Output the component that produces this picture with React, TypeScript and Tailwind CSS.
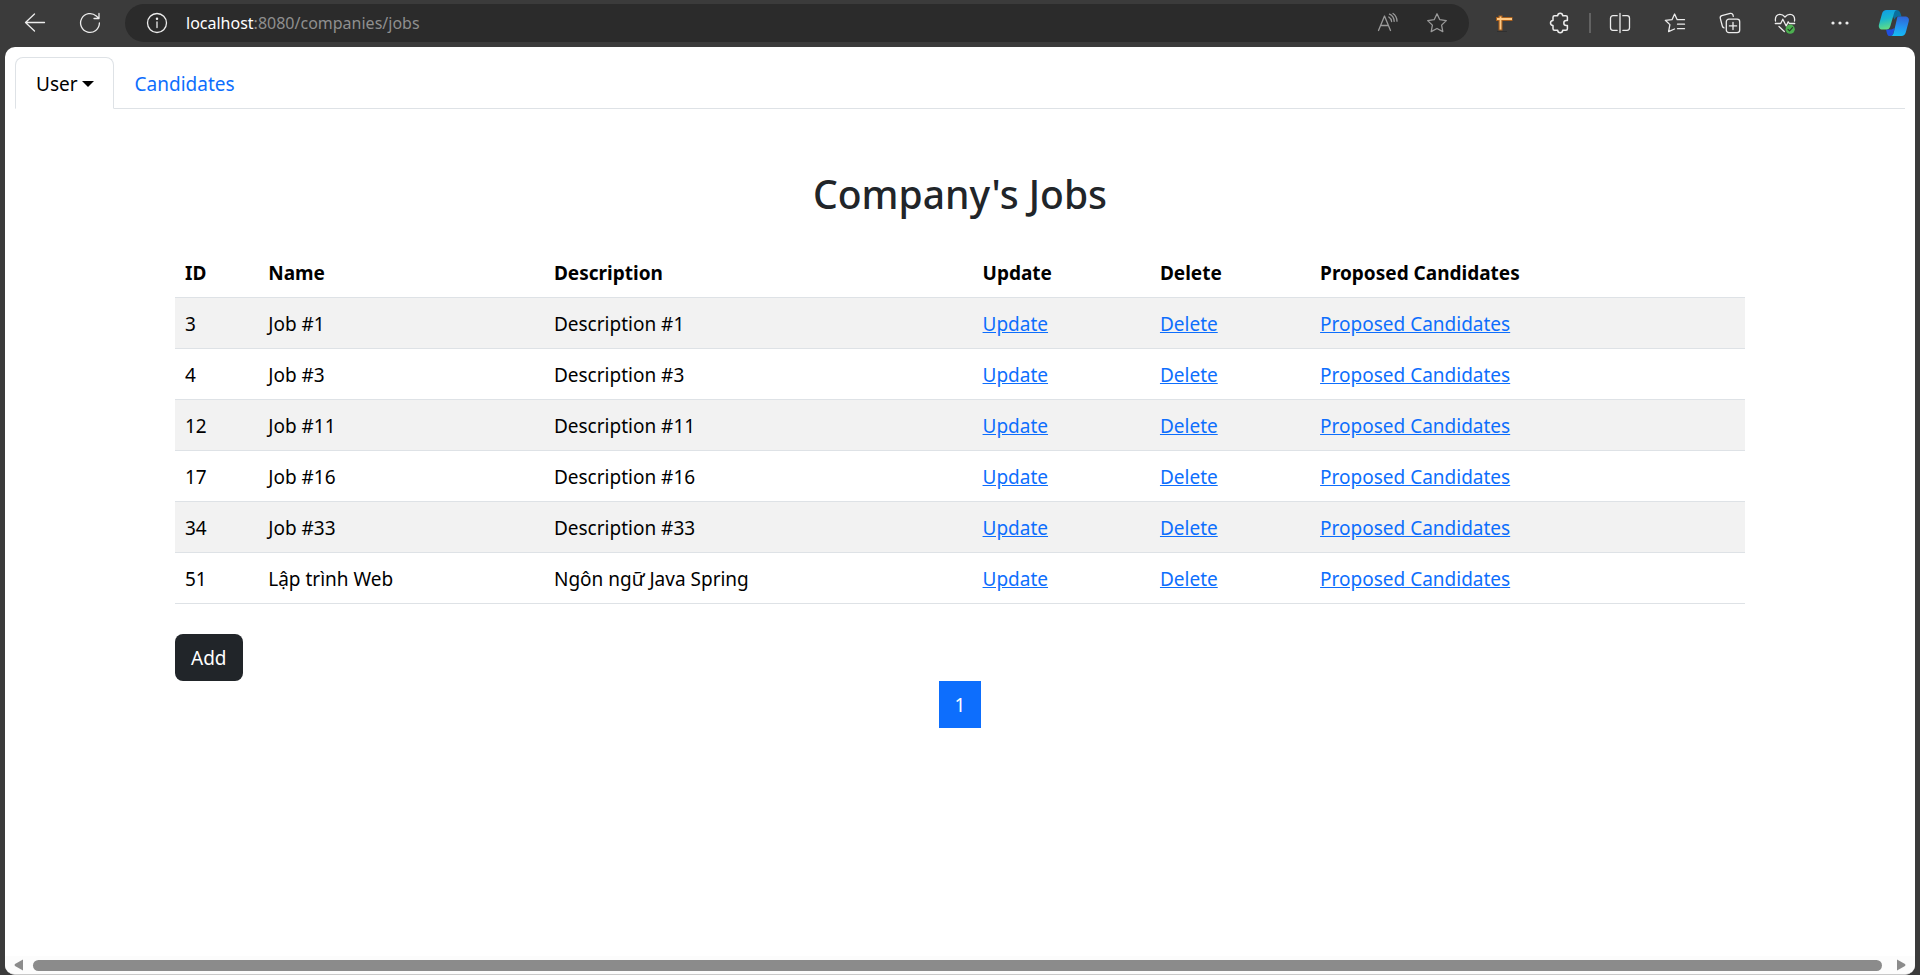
import React from "react";

type Job = { id: number; name: string; description: string };

const jobs: Job[] = [
  { id: 3, name: "Job #1", description: "Description #1" },
  { id: 4, name: "Job #3", description: "Description #3" },
  { id: 12, name: "Job #11", description: "Description #11" },
  { id: 17, name: "Job #16", description: "Description #16" },
  { id: 34, name: "Job #33", description: "Description #33" },
  { id: 51, name: "Lập trình Web", description: "Ngôn ngữ Java Spring" },
];

const columns = ["ID", "Name", "Description", "Update", "Delete", "Proposed Candidates"];

const cell = "px-2.5 pt-[11px] pb-[9px]";

function Icon({ children, stroke = "#ececec" }: { children: React.ReactNode; stroke?: string }) {
  return (
    <svg
      width="22"
      height="22"
      viewBox="0 0 22 22"
      fill="none"
      stroke={stroke}
      strokeWidth="1.3"
      strokeLinecap="round"
      strokeLinejoin="round"
      aria-hidden="true"
    >
      {children}
    </svg>
  );
}

function ToolButton({ label, children }: { label: string; children: React.ReactNode }) {
  return (
    <button type="button" aria-label={label} className="flex h-10 w-[55px] items-center justify-center">
      {children}
    </button>
  );
}

function Copilot() {
  return (
    <svg width="32" height="28" viewBox="0 0 32 28" aria-hidden="true">
      <defs>
        <linearGradient id="cpLeft" x1="0" y1="0" x2="0.2" y2="1">
          <stop offset="0" stopColor="#0f9be8" />
          <stop offset="0.5" stopColor="#19b6cf" />
          <stop offset="1" stopColor="#5fdc86" />
        </linearGradient>
        <linearGradient id="cpRight" x1="0.4" y1="0" x2="0.3" y2="1">
          <stop offset="0" stopColor="#2f66d8" />
          <stop offset="0.5" stopColor="#2492ef" />
          <stop offset="1" stopColor="#14bdf5" />
        </linearGradient>
      </defs>
      <path d="M15 1h3.500c2 0 3.200 1 3.900 3l1.100 3.500h-3.200c-2 0-3 1-3.700 3L14 6z" fill="#0a6f9e" />
      <path d="M8 20.500h5.500l3-1.500-1 5c-.5 2-1.500 3-3.500 3-1.800 0-2.500-1-3-2.600z" fill="#1f4fe0" />
      <path d="M8.500 1H19c-1.500 0-2.300 1-2.900 3l-3.700 13c-.7 2.500-1.900 3.500-4.200 3.500H4.500C1.500 20.500.3 18.400 1 15.500L4 4.800C4.800 2.200 6.200 1 8.500 1z" fill="url(#cpLeft)" />
      <path d="M20.300 7.500h6.200c3.600 0 5 2 4.200 5L27.900 23c-.7 2.700-2.100 4-4.500 4H12.500c1.600 0 2.500-1 3.100-3l3.200-13.500c.4-2 .5-3 1.500-3z" fill="url(#cpRight)" />
    </svg>
  );
}

function BrowserBar() {
  return (
    <header className="flex h-[47px] shrink-0 items-start bg-[#3b3b3b] pt-1">
      <div className="flex h-[38px] w-[125px] shrink-0 items-center pl-[7px]">
        <ToolButton label="Back">
          <Icon>
            <path d="M1.500 10.500h19M10.500 2l-9 8.500 9 8.500" />
          </Icon>
        </ToolButton>
        <ToolButton label="Refresh">
          <Icon>
            <path d="M20.400 11a9.400 9.400 0 1 1-3.100-7l2.200 2M20 1.500v5h-5" />
          </Icon>
        </ToolButton>
      </div>
      <div className="flex h-[38px] min-w-0 flex-1 items-center rounded-full bg-[#2b2b2b] pl-[21px] pr-[21px]">
        <button type="button" aria-label="View site information" className="mr-[18px]">
          <Icon>
            <circle cx="11" cy="11" r="9.500" />
            <path d="M11 10v5.500" />
            <circle cx="11" cy="6.800" r="0.600" fill="#ececec" />
          </Icon>
        </button>
        <div className="flex-1 whitespace-nowrap text-[16px] leading-6 text-[#8f8f8f]">
          <span className="text-white">localhost</span>:8080/companies/jobs
        </div>
        <div className="flex items-center gap-[27px]">
          <button type="button" aria-label="Read aloud">
            <Icon stroke="#9a9a9a">
              <path d="M1.500 18.500 7.500 4l6 14.500M3.500 13.500h8M11.800 5c1.700 1 2.600 2.400 2.800 4.500M12.500 2.200c3 1.400 4.500 3.800 4.700 7.200M16 1.500c2.600 1.700 3.900 4.300 4 7.700" />
            </Icon>
          </button>
          <button type="button" aria-label="Add to favorites">
            <Icon stroke="#9a9a9a">
              <path d="m11 1.800 2.800 5.900 6.500.9-4.700 4.500 1.200 6.500-5.800-3.100-5.800 3.100 1.200-6.500-4.700-4.500 6.500-.9z" />
            </Icon>
          </button>
        </div>
      </div>
      <div className="ml-2 flex h-[38px] items-center">
        <ToolButton label="Ruler extension">
          <svg width="22" height="22" viewBox="0 0 22 22" fill="none" aria-hidden="true">
            <path d="M2 7h16.500M6.500 3.500v15" stroke="#a85f1c" strokeWidth="4" />
            <path d="M3 7h15M6.500 4.500v13" stroke="#ffc983" strokeWidth="1.800" />
            <path d="M3 19.500h10" stroke="#303030" strokeWidth="1" />
          </svg>
        </ToolButton>
        <ToolButton label="Extensions">
          <Icon>
            <path
              strokeWidth="1.500"
              d="M5.500 3.800h3.200c.1-1.600 1-2.500 2.500-2.500s2.400.9 2.500 2.500h3.200c.9 0 1.500.6 1.500 1.500v3.200h-1.100c-1.500 0-2.500 1-2.500 2.500s1 2.500 2.500 2.500h1.100v3.200c0 .9-.6 1.500-1.500 1.500h-3.200c-.1 1.600-1 2.500-2.500 2.500s-2.400-.9-2.500-2.500H5.500c-.9 0-1.500-.6-1.500-1.500v-3.200c-1.600-.1-2.500-1-2.500-2.500s.9-2.400 2.500-2.500V5.300c0-.9.600-1.500 1.500-1.500z"
            />
          </Icon>
        </ToolButton>
        <div className="mr-px ml-0.5 h-5 w-0.5 bg-[#626262]" />
        <ToolButton label="Split screen">
          <Icon>
            <path d="M8.200 3.700H4A2.500 2.500 0 0 0 1.500 6.200v9.600A2.500 2.500 0 0 0 4 18.300h4.200M13.800 3.700H18a2.500 2.500 0 0 1 2.500 2.500v9.600a2.500 2.500 0 0 1-2.500 2.500h-4.200M11 1.500v19" />
          </Icon>
        </ToolButton>
        <ToolButton label="Favorites">
          <Icon>
            <path d="M20.500 7.700h-7.300L10.600 2 8 7.700l-6.700.6 4.600 4.300-1.300 7 5.900-2.600M13.500 12.200h7M13.500 16.700h7" />
          </Icon>
        </ToolButton>
        <ToolButton label="Collections">
          <Icon>
            <path d="M5 15.800c-1-.2-1.500-.8-1.700-1.800L1.300 6.300c-.3-1.200.2-2.200 1.500-2.600l8.400-2.300c1.300-.3 2.200.1 2.700 1.300l.4 1.600" />
            <rect x="7.300" y="7.200" width="13.400" height="13.400" rx="2.600" />
            <path d="M14 10.300v7.200M10.400 13.900h7.200" />
          </Icon>
        </ToolButton>
        <ToolButton label="Browser essentials">
          <Icon>
            <path d="M1.500 9C.8 4.500 3.300 2.300 6 2.300c2 0 3.600 1 5 2.700 1.400-1.700 3-2.700 5-2.700 2.700 0 5.200 2.200 4.500 6.700M1.300 11.500h5.400l2.100-4.300 3.400 6.800 2-4.200 1.200 1.700h5.300M5 14.500l5.300 5" />
            <circle cx="16.200" cy="17.200" r="4.600" fill="#4caf50" stroke="none" />
            <path d="m14 17.400 1.600 1.500 2.900-3.200" stroke="#263b27" strokeWidth="1.200" />
          </Icon>
        </ToolButton>
        <ToolButton label="Settings and more">
          <svg width="22" height="22" viewBox="0 0 22 22" fill="#ececec" aria-hidden="true">
            <circle cx="4" cy="11" r="1.600" />
            <circle cx="11" cy="11" r="1.600" />
            <circle cx="18" cy="11" r="1.600" />
          </svg>
        </ToolButton>
        <button type="button" aria-label="Copilot" className="flex w-[53px] justify-center">
          <Copilot />
        </button>
      </div>
    </header>
  );
}

function Tabs() {
  return (
    <nav className="mx-2.5 flex border-b border-[#dee2e6]">
      <button
        type="button"
        className="-mb-px flex h-[52px] items-center gap-1 rounded-t-lg border border-b-white border-[#dee2e6] bg-white pt-0.5 pr-[19px] pl-5 text-black"
      >
        User
        <svg width="12" height="6" viewBox="0 0 12 6" aria-hidden="true">
          <path d="M0 0h12L6 6z" fill="currentColor" />
        </svg>
      </button>
      <a href="#candidates" className="flex h-[51px] items-center px-[21px] pt-0.5 text-[#0d6efd]">
        Candidates
      </a>
    </nav>
  );
}

function JobsTable() {
  return (
    <table className="w-full table-fixed border-collapse text-left text-black">
      <colgroup>
        <col className="w-[5.3%]" />
        <col className="w-[18.2%]" />
        <col className="w-[27.3%]" />
        <col className="w-[11.3%]" />
        <col className="w-[10.2%]" />
        <col />
      </colgroup>
      <thead>
        <tr className="border-b border-[#dee2e6]">
          {columns.map((column) => (
            <th key={column} scope="col" className={`${cell} font-bold`}>
              {column}
            </th>
          ))}
        </tr>
      </thead>
      <tbody>
        {jobs.map((job) => (
          <tr key={job.id} className="border-b border-[#dee2e6] odd:bg-[#f2f2f2]">
            <td className={cell}>{job.id}</td>
            <td className={cell}>{job.name}</td>
            <td className={cell}>{job.description}</td>
            {["Update", "Delete", "Proposed Candidates"].map((action) => (
              <td key={action} className={cell}>
                <a href={`#job-${job.id}`} className="text-[#0d6efd] underline">
                  {action}
                </a>
              </td>
            ))}
          </tr>
        ))}
      </tbody>
    </table>
  );
}

function ScrollBar() {
  return (
    <div className="flex h-[18px] shrink-0 items-center bg-[#fcfcfc] px-[9px]" aria-hidden="true">
      <svg width="10" height="12" viewBox="0 0 10 12" fill="#8b8b8b">
        <path d="M9 .5v11L1 7Q0 6 1 5z" />
      </svg>
      <div className="mr-3.5 ml-[9px] h-[11px] flex-1 rounded-full bg-[#8b8b8b]" />
      <svg width="10" height="12" viewBox="0 0 10 12" fill="#8b8b8b">
        <path d="M1 .5v11L9 7q1-1 0-2z" />
      </svg>
    </div>
  );
}

export default function App() {
  return (
    <div className="flex min-h-screen flex-col bg-[#3b3b3b] font-['Noto_Sans','Open_Sans',sans-serif] text-[19px] leading-[30px] text-[#212529]">
      <BrowserBar />
      <div className="mx-[5px] flex flex-1 flex-col overflow-hidden rounded-[10px] border-b border-[#c8c8c8] bg-white pt-2.5">
        <Tabs />
        <main className="mx-auto w-full max-w-[1570px] flex-1 pt-[61px]">
          <h1 className="text-center text-[39px] font-medium leading-12">Company's Jobs</h1>
          <div className="mt-[29px]">
            <JobsTable />
          </div>
          <button type="button" className="mt-[30px] block h-[47px] rounded-lg bg-[#212529] px-4 text-white">
            Add
          </button>
          <nav aria-label="Pages" className="flex justify-center">
            <a href="#page-1" aria-current="page" className="flex h-[47px] w-[42px] items-center justify-center bg-[#0d6efd] text-white">
              1
            </a>
          </nav>
        </main>
        <ScrollBar />
      </div>
    </div>
  );
}
